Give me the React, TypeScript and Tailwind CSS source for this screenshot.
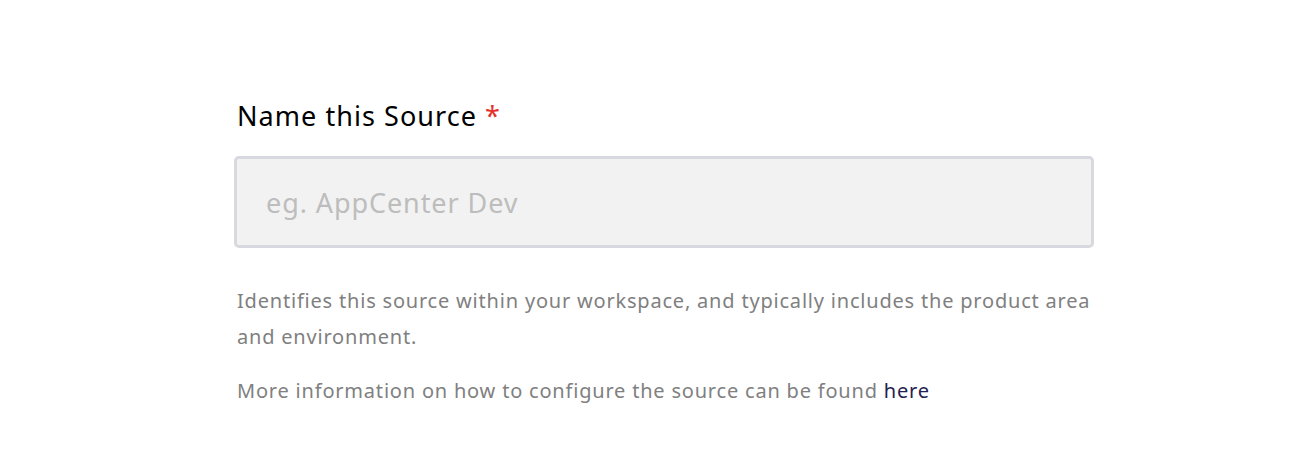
export default function App() {
  return (
    <div
      className="min-h-[472px] w-full bg-white pl-[234px] pt-[96px]"
      style={{ fontFamily: '"Noto Sans", sans-serif' }}
    >
      <div className="w-[860px]">
        <label className="block pl-[3px] text-[27px] leading-[40px] tracking-[0.039em] text-black">
          Name this Source <span className="text-[#e5302b]">*</span>
        </label>
        <input
          type="text"
          placeholder="eg. AppCenter Dev"
          className="mt-[20px] block h-[92px] w-full rounded-[5px] border-[3px] border-[#d8d8e0] bg-[#f2f2f2] px-[29px] text-[27px] tracking-[0.034em] text-black outline-none placeholder:text-[#bdbdbd]"
        />
        <div className="mt-[35px] pl-[3px] text-[20px] leading-[36px] tracking-[0.04em] text-[#808080]">
          <p>
            Identifies this source within your workspace, and typically includes the product area
            and environment.
          </p>
          <p className="mt-[18px]">
            More information on how to configure the source can be found{' '}
            <a href="#" className="text-[#1f2150]">
              here
            </a>
          </p>
        </div>
      </div>
    </div>
  )
}
